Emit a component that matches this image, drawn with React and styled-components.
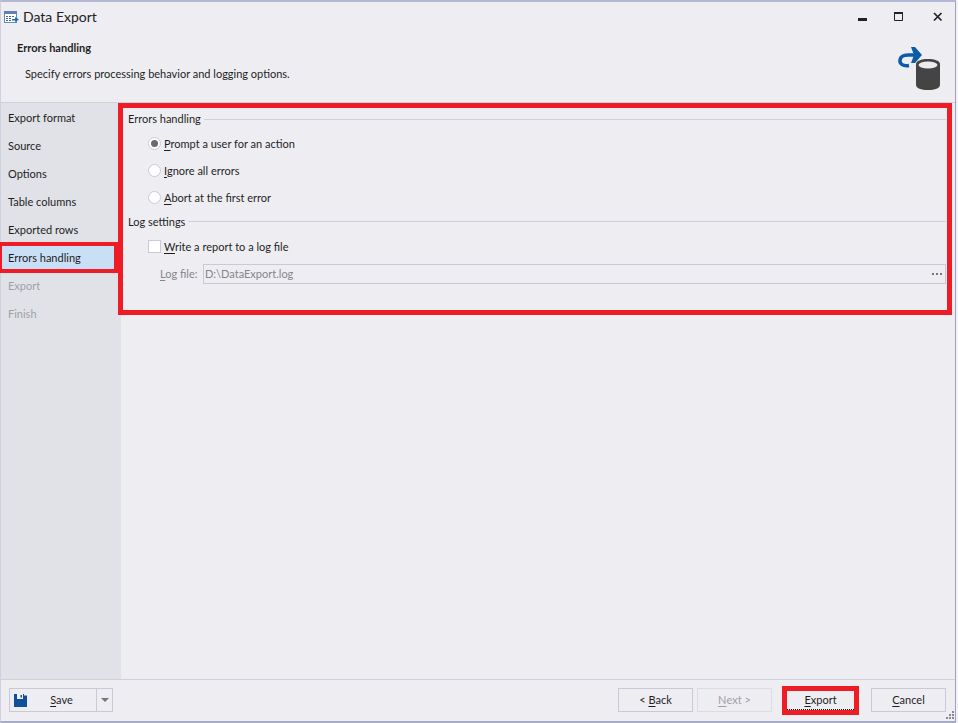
import React from "react";
import styled, { createGlobalStyle } from "styled-components";

const steps = [
  { label: "Export format" },
  { label: "Source" },
  { label: "Options" },
  { label: "Table columns" },
  { label: "Exported rows" },
  { label: "Errors handling", selected: true },
  { label: "Export", disabled: true },
  { label: "Finish", disabled: true },
];

export default function App() {
  return (
    <>
      <GlobalStyle />
      <Window>
        <TitleBar>
          <AppIcon />
          <Title>Data Export</Title>
          <WindowControls>
            <MinimizeIcon />
            <MaximizeIcon />
            <CloseIcon />
          </WindowControls>
        </TitleBar>
        <Header>
          <div>
            <Heading>Errors handling</Heading>
            <Subheading>Specify errors processing behavior and logging options.</Subheading>
          </div>
          <ExportIcon />
        </Header>
        <Body>
          <Sidebar>
            {steps.map((step) => (
              <Step key={step.label} $selected={step.selected} $disabled={step.disabled}>
                {step.label}
              </Step>
            ))}
          </Sidebar>
          <Content>
            <Panel>
              <GroupTitle>Errors handling</GroupTitle>
              <RadioRow>
                <Radio $checked />
                <span><u>P</u>rompt a user for an action</span>
              </RadioRow>
              <RadioRow>
                <Radio />
                <span><u>I</u>gnore all errors</span>
              </RadioRow>
              <RadioRow>
                <Radio />
                <span><u>A</u>bort at the first error</span>
              </RadioRow>
              <LogTitle>Log settings</LogTitle>
              <RadioRow>
                <Checkbox />
                <span><u>W</u>rite a report to a log file</span>
              </RadioRow>
              <FileRow>
                <FileLabel><u>L</u>og file:</FileLabel>
                <FileInput>
                  <FileValue>D:\DataExport.log</FileValue>
                  <Dots>
                    <i />
                    <i />
                    <i />
                  </Dots>
                </FileInput>
              </FileRow>
            </Panel>
          </Content>
        </Body>
        <Footer>
          <SaveButton>
            <SaveMain>
              <SaveIcon />
              <SaveLabel><u>S</u>ave</SaveLabel>
            </SaveMain>
            <SaveCaret>
              <Caret />
            </SaveCaret>
          </SaveButton>
          <FooterActions>
            <Button>&lt; <u>B</u>ack</Button>
            <Button $disabled><u>N</u>ext &gt;</Button>
            <ExportFrame>
              <ExportButton><u>E</u>xport</ExportButton>
            </ExportFrame>
            <Button><u>C</u>ancel</Button>
          </FooterActions>
          <Grip />
        </Footer>
      </Window>
    </>
  );
}

const AppIcon = () => (
  <svg width="15" height="13" viewBox="0 0 15 13">
    <rect x="0.5" y="0.5" width="12" height="11" fill="#fff" stroke="#6d87b5" />
    <rect x="0" y="0" width="13" height="3" fill="#5f7fb5" />
    <path d="M2 5h2v1H2zM5 5h2v1H5zM8 5h2v1H8zM2 7h2v1H2zM5 7h2v1H5zM2 9h2v1H2zM5 9h2v1H5z" fill="#41628f" />
    <path d="M8 8h3V6l4 2.5L11 11V9.500H8z" fill="#1f6db5" />
  </svg>
);

const MinimizeIcon = () => (
  <svg width="10" height="10" viewBox="0 0 10 10">
    <rect x="0" y="6" width="9" height="3" fill="#222" />
  </svg>
);

const MaximizeIcon = () => (
  <svg width="10" height="10" viewBox="0 0 10 10">
    <path d="M0.500 0.500h8v8h-8z" fill="none" stroke="#222" />
    <rect x="0" y="0" width="9" height="2" fill="#222" />
  </svg>
);

const CloseIcon = () => (
  <svg width="10" height="10" viewBox="0 0 10 10">
    <path d="M1 1l7.500 7.500M8.500 1L1 8.500" fill="none" stroke="#222" strokeWidth="1.700" />
  </svg>
);

const ExportIcon = () => (
  <svg width="46" height="45" viewBox="0 0 46 45">
    <path
      d="M12 19.500C6 20.500 2.500 18 3 14 3.500 10.500 7 9 11 9h7"
      fill="none"
      stroke="#0b5ba8"
      strokeWidth="3.500"
    />
    <path d="M14 1h4l7 8-7 8h-4l3-8z" fill="#0b5ba8" />
    <path
      d="M19 18c0-3 5-5 12-5s12 2 12 5v21c0 3-5 5-12 5s-12-2-12-5z"
      fill="#444"
    />
    <ellipse cx="31" cy="19" rx="9.500" ry="3.500" fill="#ececf0" />
  </svg>
);

const SaveIcon = () => (
  <svg width="13" height="13" viewBox="0 0 13 13">
    <path d="M0 0h13v13H0z" fill="#0f5199" />
    <rect x="3" y="0" width="6" height="5" fill="#f2f2f5" />
    <rect x="6.500" y="1" width="1.500" height="2.500" fill="#0f5199" />
    <rect x="10" y="0" width="3" height="1.500" fill="#eeeef2" />
  </svg>
);

const Caret = () => (
  <svg width="8" height="4" viewBox="0 0 8 4">
    <path d="M0 0h8L4 4z" fill="#777" />
  </svg>
);

const Grip = () => (
  <GripIcon width="8" height="8" viewBox="0 0 8 8">
    <path d="M6 0h2v2H6zM3 3h2v2H3zM6 3h2v2H6zM0 6h2v2H0zM3 6h2v2H3zM6 6h2v2H6z" fill="#8a8a94" />
  </GripIcon>
);

const GlobalStyle = createGlobalStyle`
  html, body {
    margin: 0;
    padding: 0;
    background: #f1f1f6;
  }
  u {
    text-underline-offset: 2px;
    text-decoration-thickness: 1px;
  }
`;

const Window = styled.div`
  box-sizing: border-box;
  width: 956px;
  height: 723px;
  display: flex;
  flex-direction: column;
  background: #eeeef2;
  border-top: 2px solid #b4b8d2;
  border-right: 1px solid #9ea2bd;
  border-bottom: 2px solid #a6aac6;
  border-left: 1px solid #cfd0e0;
  font-family: Lato, "Open Sans", sans-serif;
  font-size: 11px;
  color: #1e1e1e;
`;

const TitleBar = styled.div`
  flex: none;
  height: 30px;
  display: flex;
  align-items: center;
  padding-left: 3px;
`;

const Title = styled.div`
  margin: 0 0 2px 4px;
  font-size: 14px;
  color: #222;
`;

const WindowControls = styled.div`
  margin-left: auto;
  margin-right: 12px;
  display: flex;
  align-items: center;
  gap: 26px;
  & > svg:nth-child(2) {
    margin-right: 3px;
  }
`;

const Header = styled.div`
  flex: none;
  box-sizing: border-box;
  height: 71px;
  display: flex;
  justify-content: space-between;
  padding: 0 12px 0 16px;
  border-bottom: 1px solid #cfd0dc;
  & > svg {
    margin-top: 14px;
  }
`;

const Heading = styled.div`
  font-weight: 700;
  line-height: 16px;
  margin-top: 8px;
`;

const Subheading = styled.div`
  line-height: 16px;
  margin: 10px 0 0 8px;
`;

const Body = styled.div`
  flex: 1;
  min-height: 0;
  display: flex;
`;

const Sidebar = styled.div`
  flex: none;
  box-sizing: border-box;
  width: 120px;
  background: #e1e2e7;
`;

const Step = styled.div`
  box-sizing: border-box;
  height: ${(p) => (p.$selected ? "31px" : "28px")};
  margin: ${(p) => (p.$selected ? "-1px 3px -2px -1px" : "0")};
  display: flex;
  align-items: center;
  padding-left: ${(p) => (p.$selected ? "6px" : "7px")};
  color: ${(p) => (p.$disabled ? "#a0a0a6" : "#1e1e1e")};
  background: ${(p) => (p.$selected ? "#c9dff5" : "transparent")};
  border: ${(p) => (p.$selected ? "4px solid #ee1c25" : "none")};
  border-left-width: ${(p) => (p.$selected ? "2px" : "0")};
`;

const Content = styled.div`
  flex: 1;
  min-width: 0;
`;

const Panel = styled.div`
  box-sizing: border-box;
  height: 212px;
  margin: 0 3px 0 -3px;
  padding: 0 1px 0 5px;
  border: 5px solid #ee1c25;
`;

const GroupTitle = styled.div`
  height: 21px;
  margin-bottom: 1px;
  display: flex;
  align-items: center;
  gap: 3px;
  &::after {
    content: "";
    flex: 1;
    height: 1px;
    margin-top: 1px;
    background: #cfd0dc;
  }
`;

const LogTitle = styled(GroupTitle)`
  height: 20px;
  margin-bottom: 2px;
`;

const RadioRow = styled.div`
  height: 27px;
  display: flex;
  align-items: center;
  gap: 3px;
  padding-left: 20px;
`;

const Radio = styled.span`
  box-sizing: border-box;
  width: 13px;
  height: 13px;
  border-radius: 50%;
  background: #fff;
  border: 1px solid #c9cad6;
  display: flex;
  align-items: center;
  justify-content: center;
  &::after {
    content: "";
    display: ${(p) => (p.$checked ? "block" : "none")};
    width: 7px;
    height: 7px;
    border-radius: 50%;
    background: #6a6a70;
  }
`;

const Checkbox = styled.span`
  box-sizing: border-box;
  width: 13px;
  height: 13px;
  background: #fff;
  border: 1px solid #c9cad6;
`;

const FileRow = styled.div`
  display: flex;
  align-items: center;
  gap: 5px;
  margin-top: 4px;
  padding-left: 32px;
  color: #85858c;
`;

const FileLabel = styled.span`
  flex: none;
  width: 38px;
  margin-bottom: 2px;
  white-space: nowrap;
`;

const FileInput = styled.div`
  flex: 1;
  box-sizing: border-box;
  height: 20px;
  display: flex;
  align-items: center;
  justify-content: space-between;
  padding: 0 3px 0 1px;
  border: 1px solid #c9cad6;
`;

const FileValue = styled.span`
  margin-bottom: 2px;
`;

const Dots = styled.span`
  display: flex;
  gap: 2px;
  & > i {
    width: 2px;
    height: 2px;
    background: #777;
  }
`;

const Footer = styled.div`
  flex: none;
  box-sizing: border-box;
  position: relative;
  height: 42px;
  display: flex;
  align-items: flex-start;
  justify-content: space-between;
  padding: 8px 9px 0 8px;
  border-top: 1px solid #cfd0dc;
`;

const SaveButton = styled.div`
  box-sizing: border-box;
  width: 104px;
  height: 24px;
  display: flex;
  border: 1px solid #c9cad6;
`;

const SaveMain = styled.div`
  flex: 1;
  display: flex;
  align-items: center;
  padding-left: 4px;
`;

const SaveLabel = styled.span`
  flex: 1;
  margin-bottom: 2px;
  text-align: center;
`;

const SaveCaret = styled.div`
  flex: none;
  width: 15px;
  display: flex;
  align-items: center;
  justify-content: center;
  border-left: 1px solid #c9cad6;
`;

const FooterActions = styled.div`
  display: flex;
  align-items: center;
  gap: 4px;
`;

const Button = styled.div`
  box-sizing: border-box;
  width: 75px;
  height: 24px;
  padding-bottom: 2px;
  display: flex;
  align-items: center;
  justify-content: center;
  white-space: pre;
  border: 1px solid ${(p) => (p.$disabled ? "#dcdce4" : "#c9cad6")};
  color: ${(p) => (p.$disabled ? "#a0a0a6" : "#1e1e1e")};
`;

const ExportFrame = styled.div`
  box-sizing: border-box;
  width: 77px;
  height: 29px;
  margin: -2px 8px -3px 6px;
  border: 5px solid #ee1c25;
`;

const ExportButton = styled.div`
  box-sizing: border-box;
  height: 100%;
  padding-bottom: 1px;
  display: flex;
  align-items: center;
  justify-content: center;
  border-bottom: 1px dotted #111;
`;

const GripIcon = styled.svg`
  position: absolute;
  right: 1px;
  bottom: 2px;
`;
